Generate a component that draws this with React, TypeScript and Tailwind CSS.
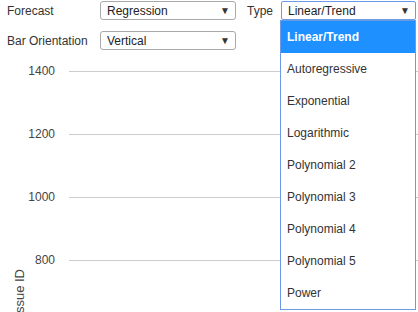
import React from 'react';

const typeOptions = [
  'Linear/Trend',
  'Autoregressive',
  'Exponential',
  'Logarithmic',
  'Polynomial 2',
  'Polynomial 3',
  'Polynomial 4',
  'Polynomial 5',
  'Power',
];

const gridLines = [
  { label: '1400', y: 21 },
  { label: '1200', y: 84 },
  { label: '1000', y: 147 },
  { label: '800', y: 210 },
];

function SelectBox({ value, width, focused = false }: { value: string; width: string; focused?: boolean }) {
  return (
    <div
      className={`flex items-center justify-between h-[19px] pl-[6px] pr-[5px] bg-white text-[12px] text-[#222] ${width} ${
        focused ? 'border border-[#6d9ae6] rounded-[2px]' : 'border border-[#a9a9a9] rounded-[3px]'
      }`}
    >
      <span className="leading-none">{value}</span>
      <span className="text-[10px] text-[#333] leading-none">▼</span>
    </div>
  );
}

export default function App() {
  return (
    <div
      className="relative w-[418px] h-[312px] overflow-hidden bg-white text-[#333]"
      style={{ fontFamily: '"Liberation Sans", Arial, sans-serif' }}
    >
      <div className="flex flex-col gap-[11px] pt-[1px]">
        <div className="flex items-center">
          <span className="w-[100px] pl-[7px] text-[12px]">Forecast</span>
          <SelectBox value="Regression" width="w-[136px]" />
          <span className="ml-[11px] w-[34px] text-[12px]">Type</span>
          <SelectBox value="Linear/Trend" width="w-[135px]" focused />
        </div>
        <div className="flex items-center">
          <span className="w-[100px] pl-[7px] text-[12px]">Bar Orientation</span>
          <SelectBox value="Vertical" width="w-[136px]" />
        </div>
      </div>

      <svg width="418" height="263" className="block" style={{ fontFamily: '"Liberation Sans", Arial, sans-serif' }}>
        {gridLines.map((g) => (
          <g key={g.label}>
            <line x1="69" x2="418" y1={g.y + 0.5} y2={g.y + 0.5} stroke="#cccccc" strokeWidth="1" />
            <text x="55" y={g.y + 4} textAnchor="end" fontSize="12" fill="#444">
              {g.label}
            </text>
          </g>
        ))}
        <text
          transform="translate(23.5,219) rotate(-90)"
          textAnchor="end"
          fontSize="13"
          fill="#444"
        >
          Issue ID
        </text>
      </svg>

      <div className="absolute left-[280px] top-[20px] w-[136px] border border-[#6d9ae6] bg-white">
        {typeOptions.map((opt, i) => (
          <div
            key={opt}
            className={`h-[32px] flex items-center pl-[6px] text-[12px] ${
              i === 0 ? 'bg-[#1e90ff] text-white font-bold' : 'text-[#333]'
            }`}
          >
            {opt}
          </div>
        ))}
      </div>
    </div>
  );
}
